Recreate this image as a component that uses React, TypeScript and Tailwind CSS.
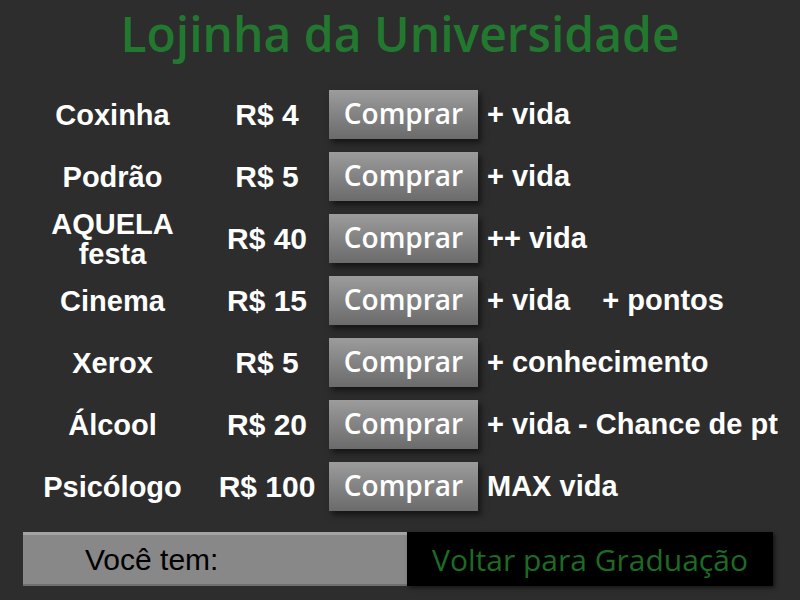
/** Lojinha da Universidade: tela da loja do jogo. */

interface Item {
  /** Nome do item, pode ter quebra de linha. */
  nome: string[]
  preco: string
  efeito: string
}

const itens: Item[] = [
  { nome: ['Coxinha'], preco: 'R$ 4', efeito: '+ vida' },
  { nome: ['Podrão'], preco: 'R$ 5', efeito: '+ vida' },
  { nome: ['AQUELA', 'festa'], preco: 'R$ 40', efeito: '++ vida' },
  { nome: ['Cinema'], preco: 'R$ 15', efeito: '+ vida    + pontos' },
  { nome: ['Xerox'], preco: 'R$ 5', efeito: '+ conhecimento' },
  { nome: ['Álcool'], preco: 'R$ 20', efeito: '+ vida - Chance de pt' },
  { nome: ['Psicólogo'], preco: 'R$ 100', efeito: 'MAX vida' },
]

const arial = "font-['Liberation_Sans',Arial,sans-serif]"
const sans = "font-['Open_Sans','DejaVu_Sans',sans-serif]"

export default function App() {
  return (
    <div className="w-[800px] h-[600px] bg-[#2d2d2d] overflow-hidden flex flex-col">
      {/* título */}
      <h1
        className={`${sans} text-[48px] font-semibold leading-none text-[#22782f] text-center pt-[10px] h-[90px]`}
      >
        Lojinha da Universidade
      </h1>

      {/* lista de itens */}
      <div className="flex flex-col gap-[13px] pl-[40px]">
        {itens.map((item) => (
          <div key={item.preco + item.nome[0]} className="flex items-center h-[49px]">
            <div
              className={`${arial} w-[145px] text-center text-white font-bold text-[29px] leading-[30px]`}
            >
              {item.nome.map((l) => (
                <div key={l}>{l}</div>
              ))}
            </div>
            <div
              className={`${arial} ml-[20px] w-[124px] text-center text-white font-bold text-[30px]`}
            >
              {item.preco}
            </div>
            <button
              className={`${sans} w-[149px] h-[49px] bg-gradient-to-b from-[#9c9c9c] to-[#6b6b6b] text-white text-[28px] font-semibold leading-none shadow-[3px_4px_6px_rgba(0,0,0,0.55)] pb-[4px]`}
            >
              Comprar
            </button>
            <div
              className={`${arial} ml-[9px] text-white font-bold text-[29px] whitespace-pre`}
            >
              {item.efeito}
            </div>
          </div>
        ))}
      </div>

      {/* barra inferior */}
      <div className="flex mt-[21px] ml-[23px] h-[54px]">
        <div
          className={`${arial} w-[384px] bg-[#888888] border-t-[3px] border-[#a4a4a4] border-b-[2px] border-b-[#6f6f6f] flex items-center pl-[62px] text-black text-[30px]`}
        >
          Você tem:
        </div>
        <button
          className={`${sans} w-[366px] bg-black text-[#1d6b24] text-[30px] flex items-center justify-center shadow-[2px_2px_4px_rgba(0,0,0,0.5)]`}
        >
          Voltar para Graduação
        </button>
      </div>
    </div>
  )
}
